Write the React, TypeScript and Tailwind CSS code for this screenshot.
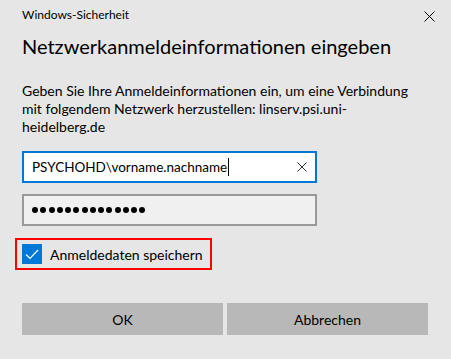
export default function App() {
  return (
    <div className="h-[359px] w-[451px] bg-[#e6e6e6] text-black" style={{ fontFamily: 'Lato, "Noto Sans", sans-serif' }}>
      <div className="flex items-center justify-between pl-[22px] pr-[16px] pt-[7px]">
        <span className="text-[12px] leading-[16px]">Windows-Sicherheit</span>
        <svg width="11" height="11" viewBox="0 0 11 11" className="mt-[2px]">
          <path d="M0.5 0.5 L10.5 10.5 M10.5 0.5 L0.5 10.5" stroke="#000" strokeWidth="1" />
        </svg>
      </div>
      <h1 className="mt-[10px] pl-[22px] text-[20px] leading-[26px] font-normal">Netzwerkanmeldeinformationen eingeben</h1>
      <p className="mt-[23px] pl-[22px] pr-[30px] text-[14px] leading-[18px]">
        Geben Sie Ihre Anmeldeinformationen ein, um eine Verbindung mit folgendem Netzwerk herzustellen: linserv.psi.uni-heidelberg.de
      </p>
      <div className="mt-[15px] flex flex-col gap-[11px] pl-[22px]">
        <div className="flex h-[32px] w-[295px] items-center justify-between border-2 border-[#0078d7] bg-white pl-[8px] pr-[8px]">
          <span className="flex items-center text-[13.5px]">
            PSYCHOHD\vorname.nachname
            <span className="ml-[1px] h-[18px] w-[1px] bg-black" />
          </span>
          <svg width="10" height="10" viewBox="0 0 10 10">
            <path d="M0.5 0.5 L9.5 9.5 M9.5 0.5 L0.5 9.5" stroke="#333" strokeWidth="1" />
          </svg>
        </div>
        <div className="flex h-[32px] w-[295px] items-center border-2 border-[#999999] bg-[#f0f0f0] pl-[8px]">
          <span className="flex gap-[2.25px]">
            {Array.from({ length: 14 }).map((_, i) => (
              <span key={i} className="h-[6px] w-[6px] rounded-full bg-black" />
            ))}
          </span>
        </div>
      </div>
      <div className="ml-[15px] mt-[12px] flex h-[32px] w-[197px] items-center gap-[8px] border-2 border-[#ff0000] pl-[5px]">
        <span className="flex h-[20px] w-[20px] items-center justify-center bg-[#0078d7]">
          <svg width="14" height="11" viewBox="0 0 14 11">
            <path d="M1 5.5 L5 9.5 L13 1" stroke="#fff" strokeWidth="1.2" fill="none" />
          </svg>
        </span>
        <span className="whitespace-nowrap text-[14px]">Anmeldedaten speichern</span>
      </div>
      <div className="mt-[33px] flex gap-[4px] pl-[22px]">
        <button className="h-[32px] w-[201px] bg-[#b8b8b8] text-[14px]">OK</button>
        <button className="h-[32px] w-[201px] bg-[#b8b8b8] text-[14px]">Abbrechen</button>
      </div>
    </div>
  );
}
